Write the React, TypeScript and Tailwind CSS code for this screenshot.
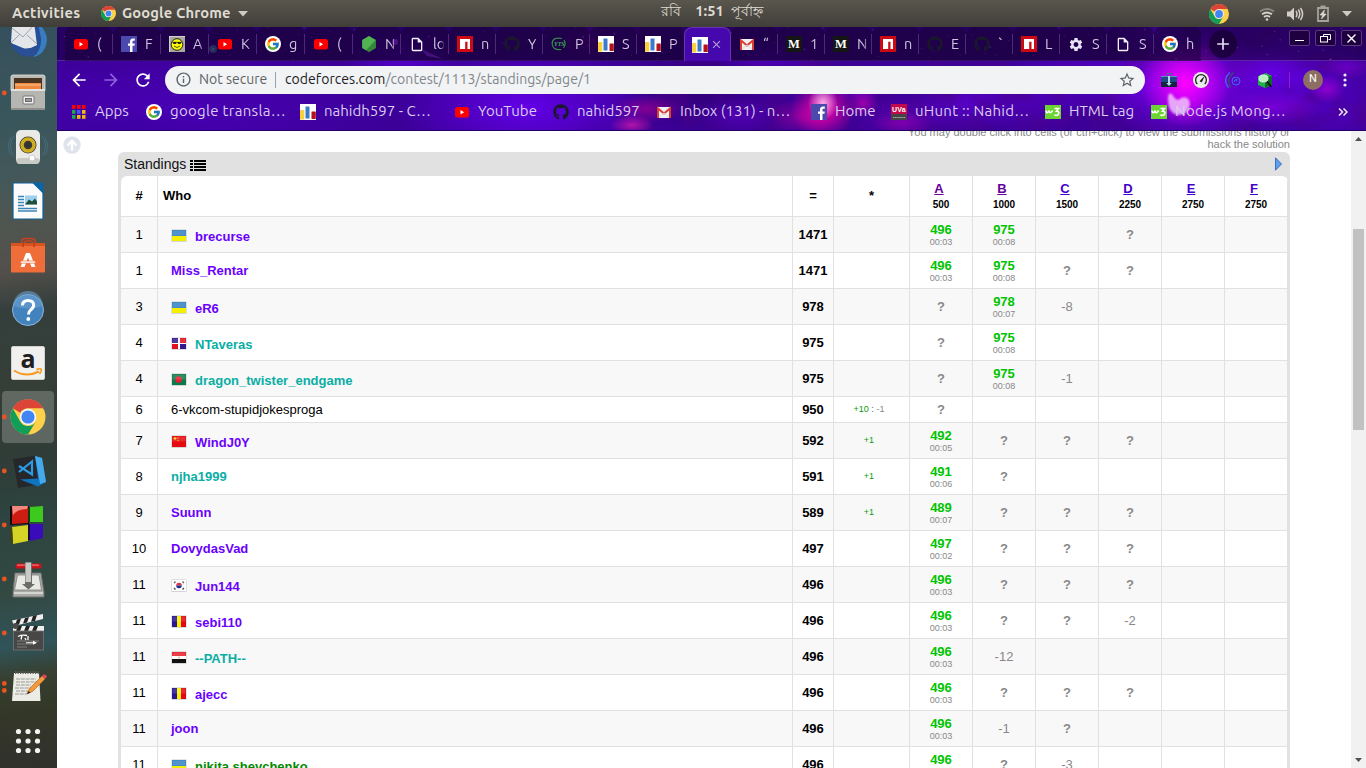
import React from "react";
import { FcGoogle } from "react-icons/fc";
import { FaGithub } from "react-icons/fa";
import {
  MdArrowBack,
  MdArrowForward,
  MdRefresh,
  MdStarBorder,
  MdInfoOutline,
  MdSettings,
  MdOutlineInsertDriveFile,
  MdAdd,
  MdClose,
} from "react-icons/md";

/* ---------- small icons ---------- */

const YouTube = () => (
  <svg width="16" height="16" viewBox="0 0 16 16">
    <rect x="1" y="3" width="14" height="10.5" rx="2.5" fill="#f00" />
    <path d="M6.5 6v4.400l3.600-2.200z" fill="#fff" />
  </svg>
);
const Facebook = () => (
  <svg width="16" height="16" viewBox="0 0 16 16">
    <rect width="16" height="16" fill="#4a49ae" />
    <path d="M9 16V9.800H7V7.400h2V5.600C9 3.600 10.200 2.500 12 2.500h1.800v2.300h-1.200c-.9 0-1.100.4-1.100 1.100v1.500h2.300l-.3 2.400h-2V16z" fill="#fff" />
  </svg>
);
const Google = () => (
  <span className="flex size-4 items-center justify-center rounded-full bg-white">
    <FcGoogle size={14} />
  </span>
);
const Smiley = () => (
  <svg width="16" height="16" viewBox="0 0 16 16">
    <rect width="16" height="16" fill="#a9a9a0" />
    <path d="M0 16V0h16" fill="none" stroke="#ddd" strokeWidth="1.500" />
    <circle cx="8" cy="8.500" r="5.800" fill="#ff0" stroke="#222" />
    <path d="M3.500 6h3.700v2H4.500zM8.800 6h3.700l-1 2H8.800z" fill="#222" />
    <path d="M3.500 6.300h9M5 10q3 3 6 0" fill="none" stroke="#222" strokeWidth=".8" />
  </svg>
);
const Node = () => (
  <svg width="16" height="16" viewBox="0 0 16 16">
    <path d="M8 0l6.800 4v8L8 16l-6.800-4V4z" fill="#43a047" />
    <path d="M8 0l6.800 4L5 14.200l-3.800-2.200V4z" fill="#5cc05c" opacity=".6" />
    <path d="M14.800 4v8L8 16l-3-1.800z" fill="#2f7d33" opacity=".7" />
  </svg>
);
const Npm = () => (
  <svg width="16" height="16" viewBox="0 0 16 16">
    <rect width="16" height="16" fill="#cb0a14" />
    <path d="M3 3h10v10h-2.500V5.800H8.200V13H3z" fill="#fff" />
  </svg>
);
const GitHub = () => <FaGithub size={16} color="#1a172c" />;
const Yts = () => (
  <svg width="16" height="16" viewBox="0 0 16 16">
    <path d="M11 2.500Q1 .5 1.200 8q.5 6.500 9 5.500M13 4q2.500 4-.5 8" fill="none" stroke="#318a45" strokeWidth="1.200" />
    <text x="3" y="10" fontSize="6" fontWeight="bold" fontStyle="italic" fill="#3cb054" fontFamily="Liberation Serif, serif">YTS</text>
  </svg>
);
const Codeforces = () => (
  <svg width="16" height="16" viewBox="0 0 16 16">
    <rect width="16" height="16" fill="#fff" />
    <rect x="0" y="6" width="4.300" height="9.500" rx=".5" fill="#f6d13c" />
    <rect x="5.500" y="2.500" width="4" height="12" rx=".5" fill="#3b7bcb" />
    <rect x="11.500" y="7.500" width="4.300" height="7.500" rx=".5" fill="#b4131c" />
  </svg>
);
const Gmail = () => (
  <svg width="16" height="16" viewBox="0 0 16 16">
    <rect x="1" y="3" width="14" height="11" rx="1" fill="#f2f0f0" />
    <path d="M2 14V4.500l6 5 6-5V14" fill="none" stroke="#d93f35" strokeWidth="2" />
    <path d="M3 13l5-4 5 4" fill="none" stroke="#ddd" />
  </svg>
);
const Medium = () => (
  <svg width="16" height="16" viewBox="0 0 16 16">
    <rect width="16" height="16" fill="#151515" />
    <text x="8" y="12.200" textAnchor="middle" fontSize="12.500" fontWeight="bold" fill="#fff" fontFamily="Liberation Serif, serif">M</text>
  </svg>
);
const W3 = () => (
  <svg width="16" height="16" viewBox="0 0 16 16">
    <rect y="1" width="16" height="14" fill="#6cd531" />
    <path d="M1 6.500q.5 3.500 2.200 1.500q.8-1 1-1.500q.3 3.500 2.200 1.500q1-1 1.300-1.500" fill="none" stroke="#fff" strokeWidth="1.500" />
    <path d="M9.500 4.500h4l-2 2.600q2.700.2 2.300 2.500q-.9 2.600-4.500 1.300" fill="none" stroke="#fff" strokeWidth="1.600" />
  </svg>
);
const Uva = () => (
  <svg width="16" height="16" viewBox="0 0 16 16">
    <rect width="16" height="10" fill="#c4094b" />
    <rect y="10" width="16" height="6" fill="#454545" />
    <text x="8" y="8" textAnchor="middle" fontSize="7" fontWeight="bold" fill="#fff" fontFamily="Liberation Sans, sans-serif">UVa</text>
    <path d="M2 13.500h12" stroke="#aaa" strokeDasharray="1.500 .6" />
  </svg>
);
const Gear = () => <MdSettings size={17} color="#e8e4f4" />;
const File = () => <MdOutlineInsertDriveFile size={17} color="#f0eef6" />;
const Apps = () => (
  <svg width="16" height="16" viewBox="0 0 16 16">
    {["#f00", "#f00", "#f00", "#1fa84a", "#4557f5", "#f0b810", "#1fa84a", "#f0b810", "#f0b810"].map((c, i) => (
      <rect key={i} x={1 + (i % 3) * 5} y={1 + Math.floor(i / 3) * 5} width="3.500" height="3.800" fill={c} />
    ))}
  </svg>
);

const ChromeLogo = ({ size }: { size: number }) => (
  <svg width={size} height={size} viewBox="0 0 36 36">
    <circle cx="18" cy="18" r="18" fill="#fdd04a" />
    <path d="M2.400 9A18 18 0 0 1 33.600 9H18a9 9 0 0 0-7.800 4.500z" fill="#dc4437" />
    <path d="M2.400 9A18 18 0 0 0 18 36l7.800-13.500A9 9 0 0 1 10.200 22.500z" fill="#129d58" />
    <circle cx="18" cy="18" r="8.600" fill="#f4f6fa" />
    <circle cx="18" cy="18" r="7" fill="#4285f4" />
  </svg>
);

/* ---------- desktop top bar ---------- */

function TopBar() {
  return (
    <header className="flex h-[27px] shrink-0 items-center bg-gradient-to-b from-[#59564d] to-[#403e39] font-['Ubuntu','Noto_Sans',sans-serif] text-[14.700px] font-bold text-[#dfdbd2]">
      <span className="ml-3 w-[89px] tracking-[0.300px]">Activities</span>
      <ChromeLogo size={15} />
      <span className="ml-[6px] w-[116px] whitespace-nowrap tracking-[0.150px]">Google Chrome</span>
      <svg width="10" height="6" viewBox="0 0 10 6"><path d="M0 0h10L5 5.500z" fill="#cfcbc3" /></svg>
      <div className="ml-[413px] flex w-[102px] items-center justify-between whitespace-pre pb-1 text-[13.500px]">
        <span className="font-medium">রবি</span>
        <span className="ml-[7px] text-[14.700px]">1:51</span>
        <span className="font-medium">পূর্বাহ্ন</span>
      </div>
      <div className="ml-auto flex items-center">
        <ChromeLogo size={20} />
        <svg className="ml-[29px]" width="18" height="16" viewBox="0 0 18 16" fill="none" stroke="#d4d0c8" strokeWidth="1.800">
          <path d="M2 5.500q7-5 14 0" stroke="#8b8880" />
          <path d="M4 8.300q5-3.600 10 0M6 11q3-2.200 6 0" />
          <circle cx="9" cy="13.500" r="1.300" fill="#d4d0c8" stroke="none" />
        </svg>
        <svg className="ml-[10px]" width="18" height="16" viewBox="0 0 18 16" fill="none" stroke="#d4d0c8" strokeWidth="1.500">
          <path d="M1 5.500h3l4-4v13l-4-4H1z" fill="#d4d0c8" stroke="none" />
          <path d="M10 5q2 3 0 6M12.300 3.500q3 4.500 0 9M14.500 2q4.200 6 0 12" />
        </svg>
        <svg className="ml-[12px]" width="14" height="18" viewBox="0 0 14 18">
          <path d="M2 3h10v13H2z" fill="none" stroke="#a5a29a" strokeWidth="1.800" />
          <rect x="4.500" y="0.500" width="5" height="2" fill="#a5a29a" />
          <path d="M8.500 5L4 10h2.600L5.500 14l4.700-5H7.500z" fill="#dfdbd2" stroke="#dfdbd2" strokeWidth=".6" />
        </svg>
        <svg className="ml-[12px] mr-[14px]" width="10" height="6" viewBox="0 0 10 6"><path d="M0 0h10L5 5.500z" fill="#cfcbc3" /></svg>
      </div>
    </header>
  );
}

/* ---------- dock ---------- */

const dockIcons: { running?: number; active?: boolean; art: React.ReactNode }[] = [
  {
    art: (
      <g>
        <circle cx="28" cy="27" r="17.500" fill="#24509a" />
        <path d="M38 11q13 12 7 25q-4 8-12 9q9-7 8-19z" fill="#3a7cc0" />
        <path d="M12 15l22-5 3 23q-8 5-14 3L11 31z" fill="#e4e6e9" />
        <path d="M12 16l11 9 12-13M11 31l9-9M37 32l-10-9" fill="none" stroke="#9ca4ac" />
        <path d="M10 30q6 8 15 7q6 0 10-3l2 8q-16 8-27-12z" fill="#2b4f94" />
      </g>
    ),
  },
  {
    running: 1,
    art: (
      <g>
        <rect x="11" y="9" width="34" height="17" rx="2" fill="#b9b9b5" stroke="#e4e4e0" strokeWidth=".8" />
        <rect x="14" y="12" width="28" height="12" fill="#4c3423" />
        <path d="M15 17h26v8H15z" fill="#f0873c" /><path d="M15 19h26" stroke="#f9c896" />
        <rect x="11" y="23" width="34" height="21" rx="1.500" fill="#b5b5b1" />
        <rect x="11" y="23" width="34" height="2" fill="#e1e1dd" />
        <rect x="11" y="42" width="34" height="2" fill="#8f8f8b" />
        <rect x="23" y="30" width="11" height="8" rx="1" fill="#eee" stroke="#777" />
        <rect x="25.500" y="32.500" width="6" height="3" fill="#999" stroke="#555" strokeWidth=".8" />
      </g>
    ),
  },
  {
    art: (
      <g>
        <path d="M14 16q-7 10 0 20M42 16q7 10 0 20M11 17q-5 9 0 18M45 17q5 9 0 18" fill="none" stroke="#4a86a5" opacity=".4" />
        <rect x="16" y="10" width="24" height="34" rx="5" fill="#e9e9e6" />
        <rect x="16.500" y="38" width="23" height="6" rx="3" fill="#c9c9c4" />
        <circle cx="28" cy="25" r="8.500" fill="#3a3a36" />
        <circle cx="28" cy="25" r="6" fill="none" stroke="#cfae22" strokeWidth="3.500" />
        <circle cx="28" cy="25" r="2.600" fill="#333" />
        <circle cx="32" cy="38" r="3" fill="#fff" stroke="#ccc" />
      </g>
    ),
  },
  {
    art: (
      <g>
        <path d="M13 9h21l9 9v27H13z" fill="#fbfbfb" stroke="#0f5f95" strokeWidth="1.200" />
        <path d="M32 8.500h11.500V20z" fill="#0b65a3" />
        <path d="M18 22.500h6M18 25.500h6M18 28.500h6M18 31.500h6M18 34.500h19M18 37h19" stroke="#3c85b9" strokeWidth="1.600" />
        <rect x="25" y="21.500" width="12" height="9" fill="#9bd0f0" />
        <path d="M25 30.500l4-5 3 2 3-3 2 3v3z" fill="#1e4f3d" />
      </g>
    ),
  },
  {
    art: (
      <g>
        <path d="M22 18v-5q0-2.500 3-2.500h7q3 0 3 2.500v5M24.500 18v-3.500q0-1.500 2-1.500h4q2 0 2 1.500V18" fill="none" stroke="#c9421a" strokeWidth="1.500" />
        <rect x="11" y="15" width="34" height="29.500" rx="1" fill="#ee6d38" />
        <rect x="11" y="15" width="34" height="3" fill="#d9531e" />
        <path d="M23 19v-4M34 19v-4" stroke="#c9421a" strokeWidth="2" />
        <path d="M20.500 39l5.500-14h4l5.500 14h-4L28 29.500 24.500 39z" fill="#fff" />
        <path d="M20.500 33h15v2.200h-15z" fill="#fff" stroke="#ee6d38" strokeWidth=".7" />
      </g>
    ),
  },
  {
    art: (
      <g>
        <circle cx="28" cy="28" r="15.500" fill="#4282bd" stroke="#8fb4d6" />
        <path d="M13 24a15 15 0 0 1 30 0q-15 5-30 0z" fill="#6ba0d0" opacity=".6" />
        <path d="M22.500 23.500q0-5 5.500-5t5.700 4.600q0 2.700-3 4.800q-2.200 1.700-2.200 4.600" fill="none" stroke="#fff" strokeWidth="3" />
        <circle cx="28.300" cy="37" r="1.900" fill="#fff" />
      </g>
    ),
  },
  {
    art: (
      <g>
        <rect x="11.500" y="10.500" width="33" height="33" rx="1.500" fill="#f0f0ef" stroke="#d0d0d0" />
        <text x="28" y="32" textAnchor="middle" fontSize="25" fontWeight="bold" fill="#1f1f1f" fontFamily="Open Sans, sans-serif">a</text>
        <path d="M14 34.500q12 7.500 25 1" fill="none" stroke="#f79a1c" strokeWidth="2" />
        <path d="M36.500 33.500q4-1.500 5 0q0 2-2 4.500" fill="none" stroke="#f79a1c" strokeWidth="1.500" />
      </g>
    ),
  },
  {
    running: 1,
    active: true,
    art: (
      <g transform="translate(10.500 9.500)">
        <circle cx="17.500" cy="17.500" r="17.500" fill="#fdd04a" />
        <path d="M2.300 8.700A17.500 17.500 0 0 1 32.700 8.700H17.500a9 9 0 0 0-7.800 4.500z" fill="#dc4437" />
        <path d="M2.300 8.700A17.500 17.500 0 0 0 17.500 35l7.800-13a9 9 0 0 1-15.600 0z" fill="#129d58" />
        <circle cx="17.500" cy="17.500" r="8.300" fill="#f4f6fa" />
        <circle cx="17.500" cy="17.500" r="6.600" fill="#4285f4" />
      </g>
    ),
  },
  {
    running: 1,
    art: (
      <g>
        <path d="M13 15l22-3 6 28-23 4z" fill="#26272b" />
        <path d="M35 12l7 2 4 24-8 4.500-18-7 18-1z" fill="#0f74bd" />
        <path d="M35 12l7 2 4 24-6 2z" fill="#45a9ea" />
        <path d="M19 22l13 8.500V17.500L19 28" fill="none" stroke="#2b9be6" strokeWidth="2.200" />
      </g>
    ),
  },
  {
    running: 1,
    art: (
      <g>
        <path d="M10 8h19v18l-19 1z" fill="#140b0b" /><path d="M12 8h16v17l-16 1z" fill="#cd1d12" />
        <path d="M12 8h16l-1 3q-10 0-14 6z" fill="#f7a59a" opacity=".8" />
        <path d="M30 9l13-1v16H30z" fill="#3ec91e" /><path d="M28 10h2v14h-2z" fill="#123a09" />
        <path d="M12 29l16-2v16l-15 3z" fill="#d5d326" /><path d="M10 29h2l1 16-2-1z" fill="#44430a" />
        <path d="M30 26h13v14l-13 3z" fill="#3a0bb9" /><path d="M28 26h2v16h-2z" fill="#12043c" />
      </g>
    ),
  },
  {
    running: 1,
    art: (
      <g>
        <path d="M15 21h26l3 19v5H13v-5z" fill="#a9aaa6" stroke="#6d6e6a" />
        <path d="M17.500 23h21.500l2.500 15h-27z" fill="#e8e9e5" stroke="#7d7e7a" strokeWidth=".8" />
        <rect x="15.500" y="11.500" width="26" height="5" rx="2.500" fill="#cf1219" />
        <rect x="17" y="12.500" width="22" height="1.200" rx=".6" fill="#f0777a" />
        <path d="M25 10.500h7V32h3l-6.500 5.500L22 32h3z" fill="#6c6d6a" /><path d="M25.500 10.500h5.500V30h-5.500z" fill="#c9cac6" />
        <path d="M14 41h29" stroke="#e2e3df" strokeWidth="1.500" />
      </g>
    ),
  },
  {
    running: 1,
    art: (
      <g>
        <path d="M12 14.500l31-6.500v5L14 20z" fill="#eee" />
        <path d="M17 13.500l4-1-2 6-4 1zM25 12l4-1-2 5.500-4 1zM33 10l4-1-2 6-4 .7z" fill="#222" />
        <rect x="13" y="20" width="31" height="5" fill="#eee" />
        <path d="M18 20h4l-2 5h-4zM26 20h4l-2 5h-4zM34 20h4l-2 5h-4z" fill="#222" />
        <rect x="13.500" y="25" width="30" height="19" fill="#474745" stroke="#777" strokeWidth=".8" />
        <path d="M17 35h22M17 38h16M17 41h10" stroke="#999" strokeWidth=".7" />
        <path d="M18 30.500q4-2 9-1M22 29.500l-1 4M25 32l1 2M28 30v4" fill="none" stroke="#fff" strokeWidth="1.300" />
        <path d="M26 36.200h7v-1.500l4 2-4 2v-1.500h-7z" fill="#fff" />
        <circle cx="15.500" cy="20" r="3" fill="#4a4a48" />
      </g>
    ),
  },
  {
    running: 2,
    art: (
      <g>
        <path d="M14 13h25l1.500 28H12z" fill="#ecebe6" />
        <path d="M15 12.500h24" stroke="#5d5d58" strokeWidth="3" strokeDasharray="1.200 1.300" />
        <path d="M16 19h20M16 22h20M16 25h15M16 31h12M15 34h12M15 28h20" stroke="#92928c" strokeWidth=".9" strokeDasharray="4 .8" />
        <path d="M27 34l2.500-5.500L42 16l3 3-12.500 12.500z" fill="#f29a37" stroke="#a85c17" strokeWidth=".6" />
        <path d="M42 16l1.500-1.500q2.500-.5 3.500 2L45 19z" fill="#e0485a" />
        <path d="M27 34l1.500-3 2 1.500z" fill="#222" />
      </g>
    ),
  },
  {
    art: (
      <g fill="#f4f4f2">
        {[18.5, 28, 37.5].map((x) => [17.5, 27, 36.5].map((y) => <circle key={`${x}-${y}`} cx={x} cy={y} r="2.600" />))}
      </g>
    ),
  },
];

function Dock() {
  return (
    <aside className="h-[741px] w-[57px] shrink-0 overflow-hidden bg-[linear-gradient(172deg,#33505c_0%,#3a535c_6%,#38565c_12%,#43585a_20%,#50554f_27%,#524f4a_33%,#343f3d_38%,#353e37_48%,#303c37_58%,#2d4440_66%,#334942_76%,#30545a_83%,#374031_87%,#333727_92%,#31312d_100%)]">
      <div className="-mt-[15px] flex flex-col">
        {dockIcons.map((d, i) => (
          <svg key={i} className="shrink-0" width="57" height="54" viewBox="0 0 57 54">
            {d.active && <rect x="2" y="1" width="52" height="52" rx="4" fill="#fff" opacity=".22" />}
            {d.running === 1 && <circle cx="4.300" cy="27" r="2.400" fill="#e95420" />}
            {d.running === 2 && (
              <g fill="#e95420"><circle cx="4.300" cy="23.500" r="2.400" /><circle cx="4.300" cy="30.500" r="2.400" /></g>
            )}
            {d.art}
          </svg>
        ))}
      </div>
    </aside>
  );
}

/* ---------- browser frame ---------- */

type Glow = [cx: number, cy: number, rx: number, ry: number, colour: string, opacity: number];

const farGlows: Glow[] = [
  [120, 80, 220, 60, "#4a00b8", 0.9],
  [470, 80, 130, 60, "#6600f0", 0.9],
  [345, 28, 60, 26, "#6d00ff", 0.6],
  [60, 100, 100, 20, "#3c00a0", 0.7],
  [640, 60, 80, 50, "#2e0070", 0.8],
  [535, 15, 40, 20, "#8a00a0", 0.6],
  [800, 60, 30, 16, "#8000d0", 0.7],
  [845, 92, 50, 26, "#6a00b0", 0.6],
  [910, 75, 60, 30, "#6400d8", 0.7],
  [970, 78, 60, 30, "#5000b8", 0.8],
  [1030, 50, 90, 40, "#5600d0", 0.9],
  [1240, 60, 90, 55, "#5c00d8", 0.9],
  [1290, 90, 50, 30, "#4c00b8", 0.8],
];

const nearGlows: Glow[] = [
  [590, 82, 35, 14, "#b00090", 0.6],
  [575, 98, 22, 10, "#ff20b0", 0.6],
  [680, 88, 40, 18, "#5a00c0", 0.7],
  [710, 28, 60, 16, "#5c00e0", 0.7],
  [745, 90, 34, 18, "#b000a0", 0.6],
  [766, 82, 32, 30, "#ff00a8", 0.95],
  [766, 76, 15, 17, "#ffc8f4", 0.85],
  [806, 76, 16, 14, "#c400b8", 0.7],
  [845, 96, 30, 12, "#c000c0", 0.4],
  [1130, 58, 90, 58, "#8400ff", 1],
  [1128, 56, 46, 44, "#ff00ff", 1],
  [1095, 6, 46, 24, "#6c00f0", 0.8],
  [1215, 45, 40, 24, "#7400ff", 0.6],
  [1215, 80, 50, 18, "#9400f0", 0.6],
  [1270, 62, 18, 14, "#b800e0", 0.6],
  [1290, 40, 26, 12, "#8a00e0", 0.5],
];

const Glows = ({ id, items }: { id: string; items: Glow[] }) => (
  <g>
    {items.map(([cx, cy, rx, ry, colour, opacity], i) => (
      <g key={i}>
        <radialGradient id={`${id}${i}`}>
          <stop offset="0" stopColor={colour} stopOpacity={opacity} />
          <stop offset="1" stopColor={colour} stopOpacity="0" />
        </radialGradient>
        <ellipse cx={cx} cy={cy} rx={rx} ry={ry} fill={`url(#${id}${i})`} />
      </g>
    ))}
  </g>
);

function Nebula() {
  return (
    <svg className="absolute inset-0" width="1309" height="104" viewBox="0 0 1309 104">
      <defs>
        <filter id="cloud" x="0" y="0" width="100%" height="100%">
          <feTurbulence type="fractalNoise" baseFrequency="0.03 0.04" numOctaves="3" seed="8" />
          <feColorMatrix values="0 0 0 0 0.07  0 0 0 0 0  0 0 0 0 0.25  2.6 0 0 0 -1.050" />
        </filter>
        <filter id="soft"><feGaussianBlur stdDeviation="1.300" /></filter>
      </defs>
      <rect width="1309" height="104" fill="#3c0098" />
      <Glows id="far" items={farGlows} />
      <rect x="560" width="749" height="104" filter="url(#cloud)" opacity=".6" />
      <Glows id="near" items={nearGlows} />
      <path d="M1112 80q-3-16 3-13q5 9 9 4q8-3 9 6q-1 10-11 11q-8-1-10-8z" fill="#fbdcff" opacity=".75" filter="url(#soft)" />
    </svg>
  );
}

const stars = Array.from({ length: 150 }, (_, i) => ({
  x: (i * 211.7 + 17 * (i % 7)) % 1309,
  y: (i * 17.3 + 5 * (i % 3)) % 33,
  r: i % 11 === 0 ? 1 : 0.6,
}));

type TabInfo = { icon: React.FC; text: string };
const tabs: TabInfo[] = [
  { icon: YouTube, text: "(" },
  { icon: Facebook, text: "F" },
  { icon: Smiley, text: "A" },
  { icon: YouTube, text: "K" },
  { icon: Google, text: "g" },
  { icon: YouTube, text: "(" },
  { icon: Node, text: "N" },
  { icon: File, text: "lo" },
  { icon: Npm, text: "n" },
  { icon: GitHub, text: "Y" },
  { icon: Yts, text: "P" },
  { icon: Codeforces, text: "S" },
  { icon: Codeforces, text: "P" },
  { icon: Codeforces, text: "" },
  { icon: Gmail, text: "“" },
  { icon: Medium, text: "1" },
  { icon: Medium, text: "N" },
  { icon: Npm, text: "n" },
  { icon: GitHub, text: "E" },
  { icon: GitHub, text: "`" },
  { icon: Npm, text: "L" },
  { icon: Gear, text: "S" },
  { icon: File, text: "S" },
  { icon: Google, text: "h" },
];

function TabStrip() {
  return (
    <div className="relative flex h-[34px] border-b border-[#7a3cc4]/60 bg-[#12002e]/50 pl-2">
      <svg className="absolute inset-0" width="1309" height="33" viewBox="0 0 1309 33">
        {stars.map((s, i) => (
          <circle key={i} cx={s.x} cy={s.y} r={s.r} fill="#a86cff" opacity=".45" />
        ))}
        <g fill="#70ffc8" opacity=".6"><circle cx="156" cy="22" r="4" opacity=".6" /><circle cx="156" cy="22" r="1.500" /></g>
        <g fill="#b040ff"><circle cx="338" cy="15" r="3" opacity=".7" /><path d="M364 22l22 10-16-3z" opacity=".6" /></g>
      </svg>
      {tabs.map((t, i) => {
        const active = i === 13;
        const Icon = t.icon;
        const line = !active && i !== 12 && i !== 23;
        return (
          <div
            key={i}
            className={`relative flex h-[34px] shrink-0 items-center rounded-t-lg ${i < 8 ? "w-12" : "w-[47px]"} ${
              active ? "border-x border-t border-[#6a30b8] bg-[#4408ac] pl-[7px]" : "bg-[#180038]/55 pl-2"
            }`}
          >
            <span className="flex w-4 shrink-0 justify-center"><Icon /></span>
            {active ? (
              <MdClose className="ml-0.5" size={13} color="#b9a0dc" />
            ) : (
              <span className="ml-2 w-[13px] whitespace-nowrap text-[14.500px] text-[#cfc6de] [mask-image:linear-gradient(to_right,#000_50%,transparent_90%)]">
                {t.text}
              </span>
            )}
            {line && <span className="ml-auto h-5 w-px bg-[#4c2a7a]" />}
          </div>
        );
      })}
      <span className="relative ml-2 mt-[3px] flex size-7 items-center justify-center rounded-full bg-[#14002e]/70">
        <MdAdd size={20} color="#e4dcf2" />
      </span>
      <div className="relative ml-auto mr-1 mt-[3px] flex gap-[5px]">
        <span className="flex h-4 w-[21px] items-end justify-center rounded-xs border border-[#5b3a80] bg-[#1c0038]/80 pb-[4px]"><span className="h-[1.500px] w-[9px] bg-white" /></span>
        <span className="flex h-4 w-[21px] items-center justify-center rounded-xs border border-[#5b3a80] bg-[#1c0038]/80">
          <svg width="11" height="9" viewBox="0 0 11 9" fill="none" stroke="#fff"><path d="M3.500 2.500v-2h7v5h-2" /><rect x=".5" y="2.500" width="7" height="5.500" /></svg>
        </span>
        <span className="flex h-4 w-[21px] items-center justify-center rounded-xs border border-[#5b3a80] bg-[#1c0038]/80">
          <svg width="9" height="9" viewBox="0 0 9 9" stroke="#fff" strokeWidth="1.400"><path d="M.5.5l8 8M8.500.5l-8 8" /></svg>
        </span>
      </div>
    </div>
  );
}

function Toolbar() {
  return (
    <div className="relative flex h-[37px] items-center text-[14.500px]">
      <MdArrowBack className="ml-3" size={20} color="#fff" />
      <MdArrowForward className="ml-3" size={20} color="#8f5fdc" />
      <MdRefresh className="ml-3" size={20} color="#fff" />
      <div className="ml-3 flex h-7 w-[980px] items-center rounded-full bg-[#f1f3f4] text-[14px]">
        <MdInfoOutline className="ml-[10px]" size={17} color="#5f6368" />
        <span className="ml-[7px] w-[76px] whitespace-nowrap text-[#5f6368]">Not secure</span>
        <span className="h-4 w-px bg-[#9da0a5]" />
        <span className="ml-[9px] whitespace-nowrap tracking-[0.050px] text-[#80868b]"><span className="text-[#202124]">codeforces.com</span>/contest/1113/standings/page/1</span>
        <MdStarBorder className="ml-auto mr-[9px]" size={18} color="#5f6368" />
      </div>
      <svg className="ml-4" width="16" height="16" viewBox="0 0 16 16">
        <rect x="0" y="4" width="16" height="11" rx="1" fill="#1f4a86" /><path d="M0 4.500h16" stroke="#5b94cc" /><rect x="0" y="10" width="16" height="5" fill="#12243f" />
        <path d="M5.500 4.500v-3h5v3" fill="none" stroke="#46678f" />
        <path d="M7 4h2v7h1.800L8 14l-2.800-3H7z" fill="#b8d8ee" />
      </svg>
      <svg className="ml-4" width="16" height="16" viewBox="0 0 16 16">
        <circle cx="8" cy="8" r="8" fill="#e9e9e9" /><path d="M4.300 12a5.400 5.400 0 1 1 7.400 0" fill="none" stroke="#222" strokeWidth="1.300" />
        <path d="M7.200 9.200L10.500 5.500 8.500 10z" fill="#222" stroke="#222" />
      </svg>
      <svg className="ml-4" width="16" height="16" viewBox="0 0 16 16" fill="none">
        <path d="M5 .5q-8 7-1.500 15" stroke="#4a66e8" strokeWidth="1.300" /><path d="M8.500.5q-8 7-2.500 15" stroke="#3a3f80" strokeWidth="1.800" />
        <circle cx="11" cy="9" r="4" stroke="#3b6cf0" /><path d="M9.300 10q0-3 3.200-2.500M11 9l1.500-1" stroke="#3b6cf0" />
      </svg>
      <svg className="ml-4" width="16" height="16" viewBox="0 0 16 16">
        <path d="M1 4l8-3 6 3v9l-7 3-7-3z" fill="#20b04a" /><path d="M8 6l7-2v9l-7 3z" fill="#0c6b2a" />
        <ellipse cx="6.500" cy="6.500" rx="4.500" ry="3.500" fill="#b8f0c0" stroke="#dff5e0" /><path d="M10 9.500l4.500 5.500" stroke="#111" strokeWidth="1.800" />
      </svg>
      <span className="ml-[16px] h-4 w-px bg-[#8a20c8]" />
      <span className="ml-[13px] flex size-5 items-center justify-center rounded-full bg-[#8d6e63] font-['Roboto',sans-serif] text-[11px] text-white">N</span>
      <svg className="ml-[20px]" width="4" height="14" viewBox="0 0 4 14" fill="#f0eaf8"><circle cx="2" cy="2" r="1.600" /><circle cx="2" cy="7" r="1.600" /><circle cx="2" cy="12" r="1.600" /></svg>
    </div>
  );
}

const bookmarks: { icon: React.FC; text: string; cls: string }[] = [
  { icon: Apps, text: "Apps", cls: "w-[75px]" },
  { icon: Google, text: "google transla…", cls: "w-[154px] tracking-[0.300px]" },
  { icon: Codeforces, text: "nahidh597 - C…", cls: "w-[154px]" },
  { icon: YouTube, text: "YouTube", cls: "w-[99px]" },
  { icon: GitHub, text: "nahid597", cls: "w-[103px]" },
  { icon: Gmail, text: "Inbox (131) - n…", cls: "w-[155px]" },
  { icon: Facebook, text: "Home", cls: "w-[80px]" },
  { icon: Uva, text: "uHunt :: Nahid…", cls: "w-[154px] tracking-[0.250px]" },
  { icon: W3, text: "HTML tag", cls: "w-[106px]" },
  { icon: W3, text: "Node.js Mong…", cls: "w-[180px] tracking-[0.250px]" },
];

function Bookmarks() {
  return (
    <div className="relative flex h-[33px] items-center border-b border-[#22006a] pb-[5px] pl-[14px] text-[15px] text-[#d9cdf0]">
      {bookmarks.map((b, i) => (
        <span key={i} className={`flex shrink-0 items-center whitespace-nowrap ${b.cls}`}>
          <b.icon />
          <span className="ml-2">{b.text}</span>
        </span>
      ))}
      <svg className="ml-[7px]" width="10" height="8" viewBox="0 0 10 8" fill="none" stroke="#eee" strokeWidth="1.500"><path d="M1 .5L4.500 4 1 7.500M5.500.5L9 4 5.500 7.500" /></svg>
    </div>
  );
}

/* ---------- flags ---------- */

const flagArt: Record<string, React.ReactNode> = {
  ua: <g><rect width="14" height="6" fill="#3582c4" /><rect y="6" width="14" height="5" fill="#f4f000" /></g>,
  dr: <g><rect width="14" height="11" fill="#fff" /><path d="M0 0h6v5H0zM8 6h6v5H8z" fill="#33188f" /><path d="M8 0h6v5H8zM0 6h6v5H0z" fill="#e01020" /></g>,
  bd: <g><rect width="14" height="11" fill="#0b7a48" /><circle cx="6.500" cy="5.500" r="3.200" fill="#f01830" /></g>,
  cn: <g><rect width="14" height="11" fill="#e40a10" /><path d="M1.500 2.500h3M3 1v3M6 1.500v1M6 4v1" stroke="#fde000" /></g>,
  kr: <g><rect width="14" height="11" fill="#fff" /><path d="M4.200 5.500a2.800 2.800 0 0 1 5.600 0z" fill="#e01020" /><path d="M4.200 5.500a2.800 2.800 0 0 0 5.600 0z" fill="#1a2c9c" /><path d="M2 3l1.500-1.500M10.500 1.500L12 3M2 8l1.500 1.500M10.500 9.500L12 8" stroke="#444" strokeWidth="1.300" /></g>,
  ro: <g><rect width="5" height="11" fill="#2a1590" /><rect x="5" width="4" height="11" fill="#fbf000" /><rect x="9" width="5" height="11" fill="#e00818" /></g>,
  eg: <g><rect width="14" height="4" fill="#e8202c" /><rect y="4" width="14" height="3.500" fill="#fff" /><rect y="7" width="14" height="4" fill="#111" /><circle cx="7" cy="5.500" r="1" fill="#e0c860" /></g>,
};

const Flag = ({ code }: { code: string }) => (
  <svg className="-mt-[2px] mr-2 shrink-0" width="16" height="13" viewBox="-1 -1 16 13">
    <rect x="-.5" y="-.5" width="15" height="12.300" rx=".5" fill="#b5b5b5" opacity=".7" />
    {flagArt[code]}
    <path d="M.5.500h13v5H.500z" fill="#fff" opacity=".14" />
  </svg>
);

/* ---------- standings ---------- */

type Row = { rank: number; name: string; tone: string; flag?: string; total: number; hacks?: string; cells: string[] };
const V = "font-bold text-[#6a00ff]";
const T = "font-bold text-[#0aaea4]";
const rows: Row[] = [
  { rank: 1, name: "brecurse", tone: V, flag: "ua", total: 1471, cells: ["496 00:03", "975 00:08", "", "?", "", ""] },
  { rank: 1, name: "Miss_Rentar", tone: V, total: 1471, cells: ["496 00:03", "975 00:08", "?", "?", "", ""] },
  { rank: 3, name: "eR6", tone: V, flag: "ua", total: 978, cells: ["?", "978 00:07", "-8", "", "", ""] },
  { rank: 4, name: "NTaveras", tone: T, flag: "dr", total: 975, cells: ["?", "975 00:08", "", "", "", ""] },
  { rank: 4, name: "dragon_twister_endgame", tone: T, flag: "bd", total: 975, cells: ["?", "975 00:08", "-1", "", "", ""] },
  { rank: 6, name: "6-vkcom-stupidjokesproga", tone: "text-black", total: 950, hacks: "+10 : -1", cells: ["?", "", "", "", "", ""] },
  { rank: 7, name: "WindJ0Y", tone: V, flag: "cn", total: 592, hacks: "+1", cells: ["492 00:05", "?", "?", "?", "", ""] },
  { rank: 8, name: "njha1999", tone: T, total: 591, hacks: "+1", cells: ["491 00:06", "?", "", "", "", ""] },
  { rank: 9, name: "Suunn", tone: V, total: 589, hacks: "+1", cells: ["489 00:07", "?", "?", "?", "", ""] },
  { rank: 10, name: "DovydasVad", tone: V, total: 497, cells: ["497 00:02", "?", "?", "?", "", ""] },
  { rank: 11, name: "Jun144", tone: V, flag: "kr", total: 496, cells: ["496 00:03", "?", "?", "?", "", ""] },
  { rank: 11, name: "sebi110", tone: V, flag: "ro", total: 496, cells: ["496 00:03", "?", "?", "-2", "", ""] },
  { rank: 11, name: "--PATH--", tone: T, flag: "eg", total: 496, cells: ["496 00:03", "-12", "", "", "", ""] },
  { rank: 11, name: "ajecc", tone: V, flag: "ro", total: 496, cells: ["496 00:03", "?", "?", "?", "", ""] },
  { rank: 11, name: "joon", tone: V, total: 496, cells: ["496 00:03", "-1", "?", "", "", ""] },
  { rank: 11, name: "nikita.shevchenko", tone: "font-bold text-[#008a00]", flag: "ua", total: 496, cells: ["496 00:03", "?", "-3", "", "", ""] },
];

const problems = [
  ["A", "500"],
  ["B", "1000"],
  ["C", "1500"],
  ["D", "2250"],
  ["E", "2750"],
  ["F", "2750"],
];

const grid = "grid grid-cols-[37px_635px_41px_76px_repeat(6,63px)]";
const cell = "flex items-center justify-center border-r border-b border-[#e1e1e1]";

function Score({ value }: { value: string }) {
  if (value.includes(" ")) {
    const [pts, time] = value.split(" ");
    return (
      <div className="text-center">
        <div className="text-[13px] leading-[14px] font-bold text-[#00c400]">{pts}</div>
        <div className="text-[9px] leading-[10px] text-[#888]">{time}</div>
      </div>
    );
  }
  return <span className={value === "?" ? "font-bold text-[#888]" : "text-[#888]"}>{value}</span>;
}

function Standings() {
  return (
    <div className="w-[1172px] shrink-0 rounded-t-md bg-[#e1e1e1] pl-[3px]">
      <div className="flex h-6 items-center pl-[3px] text-[14px] text-[#111]">
        Standings
        <svg className="ml-1 mt-0.5" width="16" height="13" viewBox="0 0 16 13" fill="#000" shapeRendering="crispEdges">
          {[1, 4, 7, 10].map((y) => (
            <g key={y}><rect y={y} width="3" height="2" /><rect x="4" y={y} width="12" height="2" /></g>
          ))}
        </svg>
        <svg className="ml-auto mr-2" width="8" height="14" viewBox="0 0 8 14"><path d="M1.500.800v12.400L7.500 7z" fill="#5f9fe8" stroke="#3b6fc4" /></svg>
      </div>
      <div className="w-[1167px] overflow-hidden rounded-t-md bg-white text-[13px] leading-[15px] text-black">
        <div className={`${grid} h-[41px] font-bold`}>
          <div className={`${cell} pb-[2px]`}>#</div>
          <div className={`${cell} !justify-start pb-[2px] pl-[5px]`}>Who</div>
          <div className={`${cell} pb-[2px]`}>=</div>
          <div className={`${cell} pb-[2px]`}>*</div>
          {problems.map(([p, s], i) => (
            <div key={p} className={`${cell} flex-col`}>
              <span className={`-ml-1 leading-[16px] underline ${i < 2 ? "text-[#660099]" : "text-[#4400cc]"}`}>{p}</span>
              <span className="pt-px text-[10px] leading-[14px]">{s}</span>
            </div>
          ))}
        </div>
        {rows.map((r, i) => (
          <div key={i} className={`${grid} ${r.rank === 6 ? "h-[26px]" : "h-9"} ${i % 2 ? "bg-white" : "bg-[#f8f8f8]"}`}>
            <div className={cell}>{r.rank}</div>
            <div className={`${cell} !justify-start pl-[13px]`}>
              {r.flag ? (
                <span className="flex items-center pt-[3px]"><Flag code={r.flag} /><span className={r.tone}>{r.name}</span></span>
              ) : (
                <span className={r.tone}>{r.name}</span>
              )}
            </div>
            <div className={`${cell} font-bold`}>{r.total}</div>
            <div className={`${cell} pr-[5px] text-[9px] text-[#0a9a0a]`}>
              {r.hacks && r.hacks.includes(":") ? (
                <span>+10 <span className="text-[#555]">:</span> <span className="text-[#888]">-1</span></span>
              ) : (
                r.hacks
              )}
            </div>
            {r.cells.map((c, j) => (
              <div key={j} className={cell}><Score value={c} /></div>
            ))}
          </div>
        ))}
      </div>
    </div>
  );
}

function Page() {
  return (
    <main className="flex h-[637px] overflow-hidden bg-white font-['Liberation_Sans',Arial,sans-serif]">
      <svg className="ml-[6px] mt-[5px] shrink-0" width="18" height="18" viewBox="0 0 18 18">
        <circle cx="9" cy="9" r="8.700" fill="#dfe3ec" />
        <path d="M9 14.500V5.500M4.500 9.500L9 5l4.500 4.500" fill="none" stroke="#fff" strokeWidth="2.400" />
      </svg>
      <div className="ml-[37px] flex w-[1172px] shrink-0 flex-col items-end">
        <p className="-mt-[5px] mb-[2px] h-6 w-[390px] text-right text-[11px] leading-3 text-[#888]">
          You may double click into cells (or ctrl+click) to view the submissions history or hack the solution
        </p>
        <Standings />
      </div>
      <div className="ml-auto flex w-[15px] flex-col items-center bg-[#f1f1f1]">
        <svg className="mt-[6px]" width="7" height="4" viewBox="0 0 7 4"><path d="M0 4h7L3.500 0z" fill="#505050" /></svg>
        <span className="mt-[88px] h-[201px] w-[11px] bg-[#c1c1c1]" />
        <svg className="mt-auto mb-[6px]" width="7" height="4" viewBox="0 0 7 4"><path d="M0 0h7L3.500 4z" fill="#505050" /></svg>
      </div>
    </main>
  );
}

export default function App() {
  return (
    <div className="flex h-[768px] w-[1366px] flex-col overflow-hidden font-['Ubuntu','Noto_Sans',sans-serif]">
      <TopBar />
      <div className="flex">
        <Dock />
        <div className="w-[1309px]">
          <div className="relative h-[104px]">
            <Nebula />
            <TabStrip />
            <Toolbar />
            <Bookmarks />
          </div>
          <Page />
        </div>
      </div>
    </div>
  );
}
